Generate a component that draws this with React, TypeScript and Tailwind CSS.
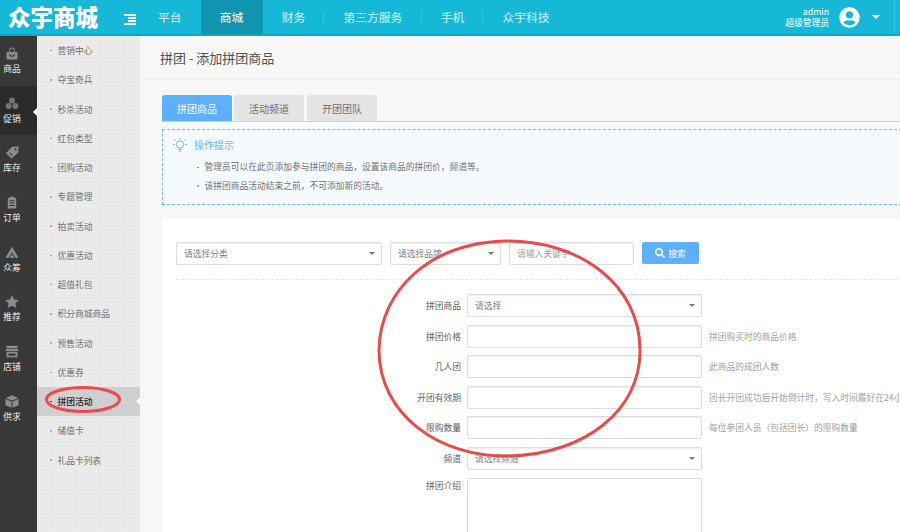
import { FaSearch, FaUserCircle } from "react-icons/fa";
import type { ReactNode } from "react";

const navItems = ["平台", "商城", "财务", "第三方服务", "手机", "众宇科技"];

function Glyph({ children }: { children: ReactNode }) {
  return (
    <svg width="14" height="13" viewBox="0 0 14 13" fill="#8c8c8c">
      {children}
    </svg>
  );
}

const sideItems: { label: string; icon: ReactNode; active?: boolean }[] = [
  {
    label: "商品",
    icon: (
      <Glyph>
        <path d="M4.2 5V3.2a2.8 2.8 0 0 1 5.6 0V5H8.8V3.2a1.8 1.8 0 0 0-3.6 0V5z" />
        <path d="M1.5 5h11v6.2a1.3 1.3 0 0 1-1.3 1.3H2.8a1.3 1.3 0 0 1-1.3-1.3zM4 7.4c.6 1.6 1.6 2.3 3 2.3s2.4-.7 3-2.3l-.8-.3c-.5 1.1-1.2 1.6-2.2 1.6s-1.7-.5-2.2-1.6z" fillRule="evenodd" />
      </Glyph>
    ),
  },
  {
    label: "促销",
    active: true,
    icon: (
      <Glyph>
        <g fill="#757575">
          <circle cx="7" cy="3.6" r="3" />
          <circle cx="3.6" cy="9" r="3" />
          <circle cx="10.4" cy="9" r="3" />
        </g>
      </Glyph>
    ),
  },
  {
    label: "库存",
    icon: (
      <Glyph>
        <path d="M7.2.8 13.6.4 13.2 6.4 6.6 12.6.9 7.2zM10.6 2.2a1.1 1.1 0 1 0 0 2.2 1.1 1.1 0 0 0 0-2.2zM5 6.6l-.7.7 2.6 2.6.7-.7z" fillRule="evenodd" />
      </Glyph>
    ),
  },
  {
    label: "订单",
    icon: (
      <Glyph>
        <path d="M5.4.5h3.2v1.3h2.6v10.7H2.8V1.8h2.6zM4.6 4.2v1h4.8v-1zM4.6 6.6v1h4.8v-1zM4.6 9v1h4.8V9z" fillRule="evenodd" />
      </Glyph>
    ),
  },
  {
    label: "众筹",
    icon: (
      <Glyph>
        <path d="M7 .8 13.4 11.4 10.6 12 7 6.6 3.4 12 .6 11.4z" />
        <path d="M7 8.2 9.3 12H4.7z" />
      </Glyph>
    ),
  },
  {
    label: "推荐",
    icon: (
      <Glyph>
        <path d="M7 0 9.1 4.4 13.9 5 10.4 8.3 11.3 13 7 10.7 2.7 13 3.6 8.3.1 5 4.9 4.4z" />
      </Glyph>
    ),
  },
  {
    label: "店铺",
    icon: (
      <Glyph>
        <path d="M1.5.8h11v2.4h-11zM.8 4h12.4v2H.8zM1.5 6.8h11v5.4h-11zM3.4 8.4v2.4h7.2V8.4z" fillRule="evenodd" />
      </Glyph>
    ),
  },
  {
    label: "供求",
    icon: (
      <Glyph>
        <path d="M7 .3 13.4 3 7 5.6.6 3z" />
        <path d="M.4 3.9 6.5 6.4v6.4L.4 10.2zM13.6 3.9 7.5 6.4v6.4l6.1-2.6z" />
      </Glyph>
    ),
  },
];

const subItems = [
  "营销中心",
  "夺宝奇兵",
  "秒杀活动",
  "红包类型",
  "团购活动",
  "专题管理",
  "拍卖活动",
  "优惠活动",
  "超值礼包",
  "积分商城商品",
  "预售活动",
  "优惠券",
  "拼团活动",
  "储值卡",
  "礼品卡列表",
];

const formRows = [
  { label: "拼团商品", kind: "select", value: "请选择", hint: "" },
  { label: "拼团价格", kind: "input", value: "", hint: "拼团购买时的商品价格" },
  { label: "几人团", kind: "input", value: "", hint: "此商品的成团人数" },
  { label: "开团有效期", kind: "input", value: "", hint: "团长开团成功后开始倒计时，写入时间最好在24小时内" },
  { label: "限购数量", kind: "input", value: "", hint: "每位参团人员（包括团长）的限购数量" },
  { label: "频道", kind: "select", value: "请选择频道", hint: "" },
];

function Caret() {
  return <span className="h-0 w-0 border-x-[3.5px] border-t-[3.5px] border-x-transparent border-t-[#777]" />;
}

function Select({ text, className }: { text: string; className: string }) {
  return (
    <div className={`flex h-[22.5px] shrink-0 items-center justify-between rounded-[2px] border border-[#dedede] bg-white pl-[7px] pr-[6px] text-[8.75px] text-[#808080] shadow-[inset_0_1px_2px_rgba(0,0,0,0.08)] ${className}`}>
      <span>{text}</span>
      <Caret />
    </div>
  );
}

function Header() {
  return (
    <header className="flex h-[36px] shrink-0 items-stretch border-b-2 border-[#12a6c4] bg-[#16b8d8] text-white">
      <div className="w-[124px] shrink-0 pl-[8px] text-[22.5px] leading-[32px] font-black">众宇商城</div>
      <div className="flex w-[14.8px] shrink-0 flex-col justify-center gap-[1.5px] pt-[5px]">
        <span className="h-[1.5px] w-[12px] bg-white" />
        <span className="ml-[4px] h-[1.5px] w-[8px] bg-white" />
        <span className="ml-[4px] h-[1.5px] w-[8px] bg-white" />
        <span className="h-[1.5px] w-[12px] bg-white" />
      </div>
      <nav className="flex text-[11.75px] leading-[34px]">
        {navItems.map((item, i) => (
          <div key={item} className={`relative px-[19.2px] ${item === "商城" ? "h-[34px] bg-[#1094b0]" : "text-white/80"}`}>
            {item}
            {i > 1 && i < 5 && <span className="absolute top-[11px] right-0 h-[12px] w-px bg-[#3cc5e0]" />}
          </div>
        ))}
      </nav>
      <div className="ml-auto flex items-center">
        <div className="text-right text-[8.75px] leading-[11px]">
          <div>admin</div>
          <div>超级管理员</div>
        </div>
        <FaUserCircle className="ml-[10px] text-[21px]" />
        <span className="ml-[12px] h-0 w-0 border-x-[4px] border-t-[4px] border-x-transparent border-t-white" />
        <span className="ml-[14px] h-full w-px bg-[#3cc5e0]" />
        <span className="w-[5px]" />
      </div>
    </header>
  );
}

function MainSidebar() {
  return (
    <aside className="flex w-[37px] shrink-0 flex-col bg-[#383838]">
      {sideItems.map((item) => (
        <div key={item.label} className={`relative flex h-[49.7px] flex-col items-center pt-[11px] pr-[13px] ${item.active ? "bg-[#2b2b2b]" : ""}`}>
          {item.icon}
          <span className="mt-[2px] text-[8.75px] leading-[13px] text-[#eeeeee]">{item.label}</span>
          {item.active && <span className="absolute top-[22px] right-0 h-0 w-0 border-y-[4px] border-r-[4px] border-y-transparent border-r-white" />}
        </div>
      ))}
    </aside>
  );
}

function SubSidebar() {
  return (
    <aside className="flex w-[103px] shrink-0 flex-col bg-[#ebebeb] bg-[radial-gradient(#e2e2e2_0.6px,transparent_0.6px)] bg-[length:3px_3px]">
      {subItems.map((item) => {
        const active = item === "拼团活动";
        return (
          <div key={item} className={`relative flex h-[29.25px] items-center pl-[13px] text-[8.75px] ${active ? "bg-[#cfcfcf] font-medium text-[#222]" : "text-[#707070]"}`}>
            <span className={`mr-[6px] h-[1.5px] w-[1.5px] rounded-full ${active ? "bg-[#333]" : "bg-[#999]"}`} />
            {item}
            {active && <span className="absolute top-[10px] right-0 h-0 w-0 border-y-[4.5px] border-r-[4px] border-y-transparent border-r-white" />}
          </div>
        );
      })}
    </aside>
  );
}

function TipsBulb() {
  return (
    <svg width="16" height="16" viewBox="0 0 16 16" fill="none" stroke="#6fb3f7" strokeWidth="1" className="shrink-0">
      <circle cx="8" cy="7.5" r="3.6" />
      <path d="M6.3 12.4h3.4M6.8 14.2h2.4M8 .6v1.8M2.2 2.2l1.3 1.3M13.8 2.2l-1.3 1.3M.8 7.5h1.8M13.4 7.5h1.8" />
    </svg>
  );
}

function FormArea() {
  return (
    <div className="mt-[14px] h-[320px] w-[760px] bg-white pt-[23px] pl-[14px]">
      <div className="flex items-center">
        <Select text="请选择分类" className="w-[206px]" />
        <Select text="请选择品牌" className="ml-[8px] w-[111px]" />
        <div className="ml-[8px] flex h-[22.5px] w-[125px] items-center rounded-[2px] border border-[#dedede] pl-[7px] text-[8.75px] text-[#a0a0a0] shadow-[inset_0_1px_2px_rgba(0,0,0,0.08)]">请输入关键字</div>
        <button className="ml-[8px] flex h-[22px] w-[57px] items-center justify-center gap-[3px] rounded-[2px] bg-[#5eb0ff] text-[8.75px] text-white">
          <FaSearch className="text-[10px]" />
          搜索
        </button>
      </div>
      <div className="mt-[14.5px] border-t border-dashed border-[#e6e6e6]" />
      <div className="mt-[14px] flex flex-col gap-[7.6px]">
        {formRows.map((row) => (
          <div key={row.label} className="flex h-[23px] items-center text-[8.75px]">
            <div className="w-[291px] shrink-0 pr-[6px] text-right text-[#606060]">{row.label}</div>
            {row.kind === "select" ? (
              <Select text={row.value} className="w-[235px]" />
            ) : (
              <div className="h-[23px] w-[235px] shrink-0 rounded-[2px] border border-[#dedede] shadow-[inset_0_1px_2px_rgba(0,0,0,0.08)]" />
            )}
            {row.hint && <div className="ml-[7px] whitespace-nowrap text-[#a0a0a0]">{row.hint}</div>}
          </div>
        ))}
        <div className="flex text-[8.75px]">
          <div className="w-[291px] shrink-0 pt-[1px] pr-[6px] text-right text-[#606060]">拼团介绍</div>
          <div className="h-[80px] w-[235px] rounded-[2px] border border-[#dedede]" />
        </div>
      </div>
    </div>
  );
}

function Content() {
  return (
    <main className="min-w-0 flex-1 overflow-hidden bg-[#f7f7f7]">
      <div className="h-[44px] border-b border-[#efefef] pl-[20px] text-[13px] leading-[44px] text-[#505050]">拼团 - 添加拼团商品</div>
      <div className="pt-[15px] pl-[22px]">
        <div className="flex h-[26px] w-[760px] gap-[2px] text-[10px]">
          <div className="flex w-[70px] items-center justify-center rounded-t-[3px] bg-[#5eb0ff] text-white">拼团商品</div>
          <div className="flex w-[70px] items-center justify-center rounded-t-[3px] bg-[#e4e4e4] text-[#707070]">活动频道</div>
          <div className="ml-[1px] flex w-[70px] items-center justify-center rounded-t-[3px] bg-[#e4e4e4] text-[#707070]">开团团队</div>
        </div>
        <div className="w-[760px] border-t border-[#b5d9fb] bg-[#f5faff] pt-[7px]">
          <div className="h-[76px] border-t border-b border-l border-dashed border-[#6db7fb] pt-[7px] pl-[9px]">
            <div className="flex items-center gap-[6px] text-[10px] leading-[16px] text-[#6fb3f7]">
              <TipsBulb />
              操作提示
            </div>
            <ul className="mt-[5px] pl-[25px] text-[8.75px] leading-[18.5px] text-[#707070]">
              <li className="flex items-center gap-[6px]"><span className="h-[1.5px] w-[1.5px] rounded-full bg-[#888]" />管理员可以在此页添加参与拼团的商品，设置该商品的拼团价，频道等。</li>
              <li className="flex items-center gap-[6px]"><span className="h-[1.5px] w-[1.5px] rounded-full bg-[#888]" />该拼团商品活动结束之前，不可添加新的活动。</li>
            </ul>
          </div>
        </div>
        <FormArea />
      </div>
    </main>
  );
}

export default function App() {
  return (
    <div className="relative flex h-[532px] w-[900px] flex-col overflow-hidden bg-[#f7f7f7] font-['Noto_Sans_CJK_SC','Liberation_Sans',sans-serif]">
      <Header />
      <div className="flex min-h-0 flex-1">
        <MainSidebar />
        <SubSidebar />
        <Content />
      </div>
      {/* red hand-drawn annotations on top of the page */}
      <svg className="pointer-events-none absolute inset-0" width="900" height="532" fill="none" stroke="#e94b4b" strokeWidth="3">
        <path d="M505 241C430 243 380 290 379 350C379 415 440 458 510 456C585 454 641 410 640 350C640 285 580 240 505 241Z" />
        <ellipse cx="83" cy="399.5" rx="36.5" ry="12" />
      </svg>
    </div>
  );
}
